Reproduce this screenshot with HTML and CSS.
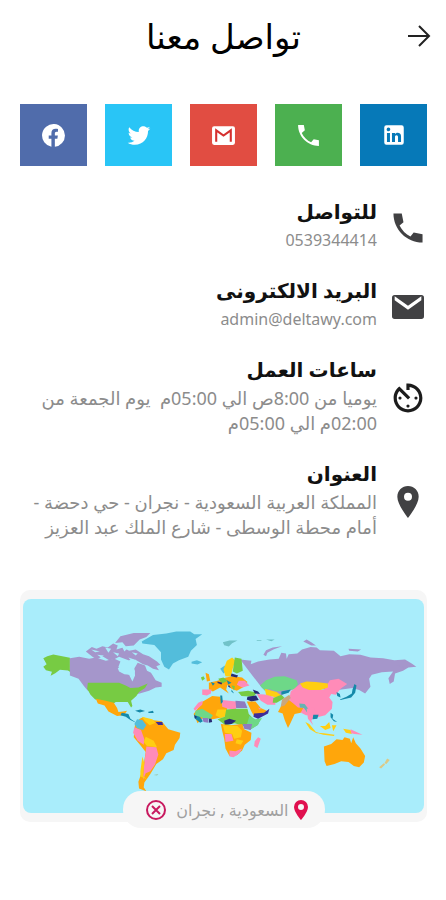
FILE: index.html
```html
<!DOCTYPE html>
<html lang="ar" dir="rtl">
<head>
    <meta charset="UTF-8">
    <meta name="viewport" content="width=device-width, initial-scale=1.0">
    <title>تواصل معنا</title>
    <link rel="stylesheet" href="styles.css">
</head>
<body>

    <header class="header">
        <a href="#" class="back" aria-label="رجوع">
            <svg viewBox="0 0 24 24" width="24" height="24"><path d="M1 12h21M12 2l10 10-10 10" fill="none" stroke="#222" stroke-width="2"/></svg>
        </a>
        <h1>تواصل معنا</h1>
    </header>

    <nav class="social">
        <a href="#" class="linkedin" aria-label="LinkedIn">
            <svg viewBox="0 0 24 24"><path d="M19 3a2 2 0 0 1 2 2v14a2 2 0 0 1-2 2H5a2 2 0 0 1-2-2V5a2 2 0 0 1 2-2h14m-.5 15.500v-5.300a3.260 3.260 0 0 0-3.260-3.260c-.85 0-1.840.52-2.320 1.300v-1.110h-2.790v8.370h2.790v-4.930c0-.77.62-1.400 1.390-1.400a1.400 1.400 0 0 1 1.400 1.400v4.930h2.790M6.880 8.560a1.680 1.680 0 0 0 1.680-1.680c0-.93-.75-1.690-1.680-1.690a1.690 1.690 0 0 0-1.690 1.690c0 .93.76 1.680 1.690 1.680m1.390 9.940v-8.370H5.500v8.370h2.770z"/></svg>
        </a>
        <a href="tel:0539344414" class="phone" aria-label="الهاتف">
            <svg viewBox="0 0 24 24"><path d="M5.500 9.500c1.900 3.900 5.100 7.100 9 9l2.500-3 5 1v5.500C11 22 2 13 2 2h5.500l1 5z"/></svg>
        </a>
        <a href="mailto:admin@deltawy.com" class="gmail" aria-label="Gmail">
            <svg viewBox="0 0 24 24"><rect x="1" y="3" width="22" height="18" rx="2"/><path class="m" d="M5 18V7l7 5 7-5v11"/></svg>
        </a>
        <a href="#" class="twitter" aria-label="Twitter">
            <svg viewBox="0 0 24 24"><path d="M22.460 6c-.77.35-1.600.58-2.460.69.88-.53 1.560-1.370 1.880-2.380-.83.5-1.750.85-2.720 1.050C18.370 4.500 17.260 4 16 4c-2.350 0-4.270 1.920-4.270 4.290 0 .34.04.67.11.98C8.280 9.090 5.110 7.380 3 4.790c-.37.63-.58 1.370-.58 2.150 0 1.490.75 2.810 1.910 3.560-.71 0-1.370-.2-1.950-.5v.03c0 2.080 1.480 3.820 3.440 4.210a4.220 4.220 0 0 1-1.930.07 4.280 4.280 0 0 0 4 2.980 8.521 8.521 0 0 1-5.330 1.840c-.34 0-.68-.02-1.020-.06C3.440 20.290 5.700 21 8.120 21 16 21 20.330 14.460 20.330 8.790c0-.19 0-.37-.01-.56.84-.6 1.560-1.360 2.140-2.230z"/></svg>
        </a>
        <a href="#" class="facebook" aria-label="Facebook">
            <svg viewBox="0 0 24 24"><path d="M23 12a11 11 0 1 0-13 10.800v-7.600H7.400V12H10V9.600C10 6.900 11.600 5.500 14 5.500c1.100 0 2.300.2 2.300.2v2.700h-1.300c-1.300 0-1.700.8-1.700 1.600v2h2.900l-.5 3.200h-2.400v7.700A11 11 0 0 0 23 12z"/></svg>
        </a>
    </nav>

    <main>
        <section class="item">
            <svg class="icon" viewBox="1 1 22 22"><path d="M6.200 10.300c1.500 3.200 4.300 6 7.500 7.500l2.200-2.700 6.100 1.200V22C11 22 2 13 2 2h5.700l1.200 6.100z"/></svg>
            <div class="text">
                <h2>للتواصل</h2>
                <p>0539344414</p>
            </div>
        </section>

        <section class="item">
            <svg class="icon" viewBox="0 0 24 24"><path d="M22 3H2a2 2 0 0 0-2 2v14a2 2 0 0 0 2 2h20a2 2 0 0 0 2-2V5a2 2 0 0 0-2-2zm0 4l-10 7L2 7V4l10 7 10-7z"/></svg>
            <div class="text">
                <h2>البريد الالكترونى</h2>
                <p>admin@deltawy.com</p>
            </div>
        </section>

        <section class="item">
            <svg class="icon clock" viewBox="2 2 20 20"><path d="M11 17c0 .55.45 1 1 1s1-.45 1-1-.45-1-1-1-1 .45-1 1zm0-14v4h2V5.080c3.390.49 6 3.390 6 6.920 0 3.870-3.130 7-7 7s-7-3.130-7-7c0-1.680.59-3.220 1.580-4.420L12 13l1.410-1.410-6.800-6.800v.02C4.420 6.450 3 9.050 3 12c0 4.970 4.020 9 9 9 4.970 0 9-4.030 9-9s-4.030-9-9-9h-1zm7 9c0-.55-.45-1-1-1s-1 .45-1 1 .45 1 1 1 1-.45 1-1zM6 12c0 .55.45 1 1 1s1-.45 1-1-.45-1-1-1-1 .45-1 1z"/></svg>
            <div class="text">
                <h2>ساعات العمل</h2>
                <p class="long">يوميا من 8:00ص الي 05:00م &nbsp;يوم الجمعة من<br>02:00م الي 05:00م</p>
            </div>
        </section>

        <section class="item">
            <svg class="icon" viewBox="0 0 24 24"><path d="M12 0a8 8 0 0 0-8 8c0 6 8 16 8 16s8-10 8-16a8 8 0 0 0-8-8zm0 11a3 3 0 1 1 0-6 3 3 0 0 1 0 6z"/></svg>
            <div class="text">
                <h2>العنوان</h2>
                <p class="long">المملكة العربية السعودية - نجران - حي دحضة -<br>أمام محطة الوسطى - شارع الملك عبد العزيز</p>
            </div>
        </section>

        <div class="map-card">
            <svg class="map" viewBox="39 54 1206 645">
                <!-- north america and greenland -->
                <path fill="#77cb43" d="M100 232l12-6 18-5 50 10v36l16 16-22-14-24-2-14 10-14 8 4-12-18-5-8-10 10-8z"/>
                <path fill="#a596cb" d="M180 232l28-4 30 6 20-4 30 10 26-6 18 8-6 16 10 14 22 10 10 20 8-18-2-22 10-16 22 8 6 16 12 6 14 22 18 8 0 12-18 2-20 10-28 8-18 4-22-12H234l-12-14-16-22-26-10z"/>
                <path fill="#a596cb" d="M228 212l18-14 14 6 18-8 16 4 16-12 14 6-4 12 20-6 18 10 20-4 22 14 18 6 24 16 10 10-12 4 8 12-18-4-16-10-14-4-24-14-20 2-28-10-16 8-14 2-20-12-18 10-14-10zM316 186l16-20 40-10 50 0-12 12-20 8-18 18-24 2-10-12z"/>
                <path fill="#a9edfb" d="M244 206l12 8 14-2zM286 200l10 16 8-12zM336 196l8 16 8-8zM366 214l12 10 6-6zM262 222l20 2-8 6zM310 214l14 12 4-8zM356 230l10 12 8-6zM324 262l14-8 20 4 18 12-4 20-12-8-16-2-16-8z"/>
                <path fill="#77cb43" d="M234 306h94l20 8 14 8 24-2 28-12-8 14-18 12-8 12-16 14 4 16-4 4-10-16-36 0-16 10-16-12-30-6-14-14-10-18z"/>
                <path fill="#ffa60b" d="M258 354l30 6 24 6 10 16 4 12 14-2 12-2-10 14-20 2-26-14-12-18-20-6z"/>
                <path fill="#1489a9" d="M336 396l20 4 6 14 20 14-20-10-14-10-16-4zM376 390l16-4 14 5-16 4zM414 394l16-4 2 7h-14z"/>
                <path fill="#53bddb" d="M396 182l34-20 40-4 30-6 42 0 12 8 24 0-20 14 4 18-18 18-8 18-28 10-18 10-12 18-14-8-10-22 0-22-20-22-36-4zM546 243l16-5 16 6-14 7-18-3z"/>
                <!-- south america -->
                <path fill="#ffa60b" d="M400 410l24 8 32 4 20 24 36 10-2 16-14 20-4 16-22 10-10 18-20 14-18 30-18 26-2 14 8 12-22-8-2-20 14-40 8-50-16-20-20-24 4-40 14-16z"/>
                <path fill="#ff8bb8" d="M374 440l20 8 10 28-2 16-18-12-14-24zM410 498l30 2 6 22-10 30-14 20-14 6-8 20 2-34z"/>
                <path fill="#53bddb" d="M382 416l16 2 12 16-10 14-18-6-8-12z"/>
                <path fill="#ffce12" d="M396 408l32 8 10 10-18 8-14-12zM408 468l24 12 10 20-30-4-10-12zM398 528l6 20-4 38 12 10-20-8 0-16z"/>
                <path fill="#3e2c98" d="M438 424h20l2 9h-14z"/>
                <path fill="#9ac4a8" d="M432 583l14-3-4 5z"/>

                <!-- russia and the arctic islands -->
                <g transform="translate(618)" fill="#a596cb">
                    <path d="M74 236l34 4-2 10 22-8 34-6 28-2 8-18 14 2 2 16 6-14 26-2 14-12 26-8 18 2 10 8 42 2 20 16 26-6 34 2 30 8 38 2 34 6 32-2 20 12 14 10-24 2-16 10-24 8-4 24-12 8-4-18 14-20-34 2-30 8-8 12 4 24-16 20-18-10-20-6-60 8-42-6-30-8-44 8-38 20-24-4-34-18z"/>
                    <path d="M144 222l8-14 20-8 28-4-26 10-18 10-4 10zM264 182l10-6 14 8 14 10-14 0zM400 204l38 2-10 6-26-2zM546 254l18 2 2 6z"/>
                    <path fill="#71c2c8" d="M22 184l20-5 24 0-16 8-10 10-14-4zM124 178h14v2h-14zM152 176l26 0-10 5z"/>
                </g>

                <!-- europe, middle east and africa -->
                <g transform="translate(540 180)">
                    <path fill="#53bddb" d="M92 84l14-10 6 16-10 8z"/>
                    <path fill="#ffce12" d="M112 60l16-10 10 10-8 22-6 26-16-2-6-20z"/>
                    <path fill="#77cb43" d="M136 50l20 4 4 36-18 8-12-6zM34 110l8-4 4 8-8 6z"/>
                    <path fill="#ffa60b" d="M48 96l10 4 4 20-10 2zM58 126l26-6 26-10 20-4 28 4 16 14-10 14-22 12-16-6-12-12-4 14 8 12-12-8-14-10-14 8-8 4-12-6z"/>
                    <path fill="#ff8bb8" d="M38 146h28l-2 12-12 6-14-2zM148 120l18 0 14 14-22 6-16-8z"/>
                    <path fill="#77cb43" d="M86 114l16-4 12 10-16 8zM126 134l10 2-2 14zM146 154l30-4 26 6-10 12-36-2z"/>
                    <path fill="#272b76" d="M126 98l20 6-4 6-18-4zM84 122l14 4-2 5-12-4zM118 132l6 10-8-4zM190 146l16 6 6 8-16-2zM174 168l26-4 8 14-22 4-14-6z"/>
                    <path fill="#1489a9" d="M112 118l14 8-10 5zM64 124l12 4-6 7zM126 146l8 12-8-5z"/>
                    <path fill="#ffa60b" d="M40 182l28-16 24 2 8 26 14 8-10 26-34 8-28-6-18 18-12-28z"/>
                    <path fill="#ff8bb8" d="M26 186l14-6-2 12-22 18-4-6zM98 178l42 4v24l-24-2-18-6z"/>
                    <path fill="#1489a9" d="M92 164l6 0 2 20-6 6zM14 222l14 2 12 18-8 4-18-14z"/>
                    <path fill="#6ed888" d="M18 210l20-6 32 20-8 12-20-4-26-8z"/>
                    <path fill="#ffce12" d="M84 206h26l2 20-18 6-16-8z"/>
                    <path fill="#8f7bc0" d="M138 180l28 2 8 20-34 0z"/>
                    <path fill="#77cb43" d="M110 206l28-2 36 0 4 16 20 20 14-4-6 16-22 14-22-10-26-8-28 6-24-18 22-8z"/>
                    <path fill="#6ed888" d="M180 226l18 10 20-4-14 22-24 14-8-16z"/>
                    <path fill="#272b76" d="M104 240l16-6 20 6-14 10-20 2zM58 234l8 0 2 10-10 2zM14 224l8 4-4 6z"/>
                    <path fill="#8f7bc0" d="M38 232l18 0 0 14-14-2zM160 250l28 0-4 18-20-4z"/>
                    <path fill="#ffa60b" d="M94 250l30 4 34-4 6 16 22 10-2 22-18 14-8 18-16 14-22 2-12-22-4-30-6-24z"/>
                    <path fill="#ffce12" d="M100 254l44 2 14 14-4 20-20 4-6-14-22-4zM142 296l20 4-8 12-16-4z"/>
                    <path fill="#ff8bb8" d="M106 280l20 0 6 20-24 4zM120 330l18 2 20-8-8 14-18 12-12-2zM206 290l8 4-10 28-10-6 2-14z"/>
                    <path fill="#ffa60b" d="M172 182l26 0 16 20 18 8-8 14-28 6-10-18z"/>
                    <path fill="#3e2c98" d="M194 218l30-2 16-12-4 14-30 16-14-6z"/>
                    <path fill="#ff8bb8" d="M202 160l34 2 22 10 0 20-24 0-20-12zM206 200l10 4-6 2z"/>
                </g>

                <!-- asia and oceania -->
                <g transform="translate(780 240)">
                    <path fill="#6ed888" d="M-28 74l18-16 26-10 30-2 36 12 4 12-10 16-28 2-24 4-28-8-10 6z"/>
                    <path fill="#ffce12" d="M-14 84l36 10 14 10-16 6-30-8z"/>
                    <path fill="#77cb43" d="M12 112l24-10 10 10-24 14-12 0z"/>
                    <path fill="#1489a9" d="M36 92l28-6-6 10-22 6z"/>
                    <path fill="#ff8bb8" d="M64 92l28-22 34 16 38 2 18-30 26-4 26 16-20 14-14 18-14-2-6 10 10 14-2 20-20 20-24 6-20-6-14 0-22-12-30-24z"/>
                    <path fill="#ffce12" d="M92 68l20-6 28 2 36 4 0 12-22 8-34 0-20-8z"/>
                    <path fill="#ffa60b" d="M34 138l20-24 18 14 14 12 16 2-8 14-18 4-12 26-8 16-10-24-6-20-14-4z"/>
                    <path fill="#c9a77d" d="M38 116l22-14 4 10-18 22-12 4z"/>
                    <path fill="#65b4b2" d="M90 128l16 2 14 18-6 8-10-14-12-2z"/>
                    <path fill="#ff8bb8" d="M112 144l20-4 16 26-14 2-8 12 6 14-16-20z"/>
                    <path fill="#1489a9" d="M132 162l16 0-4 12-14 2zM202 94l10 6 2 10-10-4zM212 116l20-8 16-10 2-12 6-16 6 4-4 22-12 14-32 8zM184 156l8 6-2 12 14 10-10-2-10-12z"/>
                    <path fill="#ffce12" d="M108 184l12 6 20 24 14 4-12 0-20-12zM142 216l22 2 32 4-2 4-32-4zM152 196l16 0 12-12 4 18-16 6zM188 194h14l-10 18zM222 204l22 4 4 12-18-4z"/>
                    <path fill="#ff8bb8" d="M244 206l18 8 18 8-24-2-10-2z"/>
                    <path fill="#ffa60b" d="M164 258l22-8 16-14 18 2 6-8 16 4 4 14 6-18 8 18 14 16 14 22-4 20-14 14-16-4-16-12-22-2-20 8-24 6-6-14zM258 306l10 0-4 10z"/>
                    <path fill="#dcc987" d="M354 294l8 4-10 12-6-2zM344 308l4 4-12 12-6-4z"/>
                </g>
            </svg>
            <div class="place">
                <svg class="pin" viewBox="0 0 14 20"><path d="M7 0a7 7 0 0 0-7 7c0 5 7 13 7 13s7-8 7-13a7 7 0 0 0-7-7zm0 10a3 3 0 1 1 0-6 3 3 0 0 1 0 6z"/></svg>
                <span>السعودية , نجران</span>
                <button type="button" class="clear" aria-label="حذف">
                    <svg viewBox="0 0 20 20"><circle cx="10" cy="10" r="9"/><path d="M6 6l8 8M14 6l-8 8"/></svg>
                </button>
            </div>
        </div>
    </main>

</body>
</html>
```
FILE: styles.css
```css
* {
    box-sizing: border-box;
}
body {
    background-color: #fff;
    color: #111;
    font-family: 'Noto Sans', 'DejaVu Sans', sans-serif;
    margin: 0;
    padding: 16px 19px 16px 20px;
}
h1, h2, p {
    margin: 0;
}
.header {
    display: grid;
    grid-template-columns: 32px 1fr 32px;
    align-items: center;
    height: 40px;
}
.header h1 {
    color: #000;
    font-size: 34px;
    font-weight: normal;
    line-height: 40px;
    text-align: center;
}
.back {
    display: flex;
    margin-right: -4px;
}
.social {
    display: flex;
    gap: 18px;
    margin-top: 48px;
}
.social a {
    display: flex;
    flex: 1;
    align-items: center;
    justify-content: center;
    height: 62px;
}
.social svg {
    width: 26px;
    height: 26px;
    fill: #fff;
}
.social .phone svg,
.social .gmail svg,
.social .facebook svg {
    width: 25px;
    height: 25px;
}
.social .m {
    fill: none;
    stroke: #d5302f;
    stroke-width: 2;
}
.linkedin {
    background-color: #0679b8;
}
.phone {
    background-color: #4cb050;
}
.gmail {
    background-color: #e14d42;
}
.twitter {
    background-color: #29c5f6;
}
.facebook {
    background-color: #506cab;
}
main {
    display: flex;
    flex-direction: column;
    gap: 22px;
    margin-top: 30px;
}
.item {
    display: flex;
    align-items: center;
    gap: 15px;
    padding-right: 3px;
}
.icon {
    flex: none;
    width: 32px;
    height: 38px;
    padding-top: 6px;
    fill: #414143;
}
.clock {
    fill: #1c1c1c;
}
.text h2 {
    font-size: 20px;
    font-weight: bold;
    line-height: 32px;
}
.text p {
    color: #8c8c8c;
    font-size: 16px;
    line-height: 25px;
}
.text .long {
    font-size: 18px;
    white-space: nowrap;
}
.map-card {
    position: relative;
    margin-top: 28px;
    padding: 9px 3px;
    background-color: #f6f6f6;
    border-radius: 10px;
}
.map {
    display: block;
    width: 100%;
    background-color: #a9edfb;
    border-radius: 8px;
}
.place {
    position: absolute;
    bottom: -6px;
    left: 50%;
    transform: translateX(-50%);
    display: flex;
    align-items: center;
    width: 202px;
    height: 37px;
    padding-right: 17px;
    background-color: #f6f6f6;
    border-radius: 18px;
    color: #a0a0a0;
    font-size: 16px;
    white-space: nowrap;
}
.pin {
    width: 14px;
    height: 20px;
    margin-left: 5px;
    fill: #e0104f;
}
.clear {
    width: 20px;
    height: 20px;
    margin-right: 10px;
    padding: 0;
    border: 0;
    background: none;
}
.clear svg {
    display: block;
    fill: none;
    stroke: #c8195f;
    stroke-width: 2;
}
```
